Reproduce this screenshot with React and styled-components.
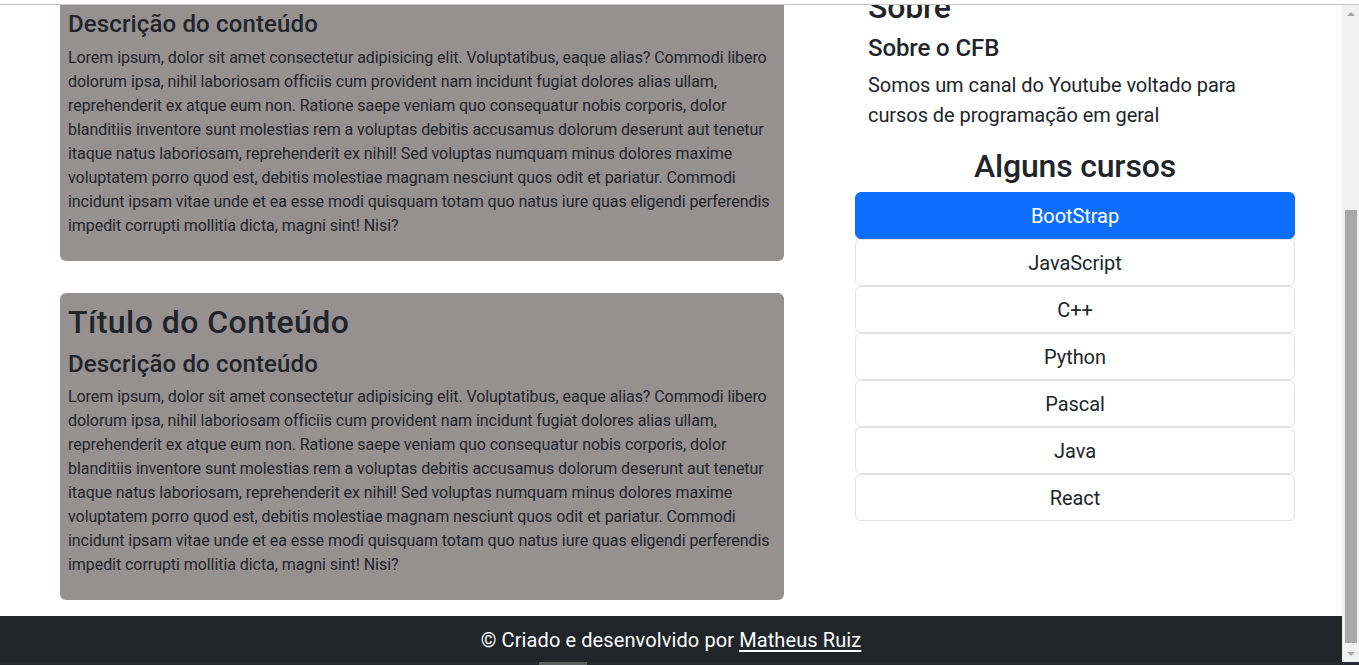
import React from "react";
import styled, { createGlobalStyle } from "styled-components";

const GlobalStyle = createGlobalStyle`
  * { box-sizing: border-box; }
  html, body { margin: 0; padding: 0; overflow: hidden; }
  body {
    font-family: Roboto, "Noto Sans", sans-serif;
    color: #212529;
    background: #fff;
    letter-spacing: -0.06px;
  }
`;

const Frame = styled.div`
  display: flex;
  flex-direction: column;
  width: 1359px;
  height: 665px;
`;

const TopStrip = styled.div`
  height: 5px;
  flex: none;
  background: #fff;
  border-bottom: 1px solid #c6c6c6;
`;

const Viewport = styled.div`
  display: flex;
  flex: 1;
  min-height: 0;
`;

const Page = styled.div`
  flex: 1;
  overflow: hidden;
`;

const Content = styled.div`
  margin-top: ${(p) => p.$scroll}px;
`;

const Main = styled.main`
  display: grid;
  grid-template-columns: 724px 440px;
  column-gap: 71px;
  padding-left: 60px;
  align-items: start;
`;

const LeftCol = styled.section`
  display: flex;
  flex-direction: column;
  gap: 32px;
`;

const Card = styled.article`
  background: #959191;
  border-radius: 6px;
  padding: 9px 8px 7px;
`;

const Title = styled.h2`
  margin: 0 0 7px;
  padding-top: 1px;
  font-size: 32px;
  font-weight: 500;
  line-height: 1.2;
  letter-spacing: -0.2px;
  text-align: ${(p) => (p.$center ? "center" : "left")};
`;

const CardTitle = styled(Title)`
  letter-spacing: 0.45px;
`;

const Subtitle = styled.h4`
  margin: 0 0 7px;
  padding-top: 1px;
  font-size: 24px;
  font-weight: 500;
  line-height: 1.2;
  letter-spacing: ${(p) => (p.$wide ? "0.14px" : "-0.1px")};
`;

const Para = styled.p`
  margin: 0 0 16px;
  font-size: 16px;
  line-height: 1.5;
`;

const Line = styled.span`
  display: block;
  white-space: nowrap;
`;

const RightCol = styled.aside`
  padding-top: 33px;
  display: flex;
  flex-direction: column;
`;

const About = styled.div`
  padding: 0 13px;
`;

const AboutText = styled.p`
  margin: 0 0 16px;
  font-size: 20px;
  line-height: 1.5;
`;

const CourseList = styled.div`
  display: flex;
  flex-direction: column;
  margin-top: -1px;
`;

const CourseItem = styled.a`
  display: flex;
  align-items: center;
  justify-content: center;
  height: 47px;
  padding-top: 2px;
  border: 1px solid ${(p) => (p.$active ? "#0d6efd" : "#e2e2e2")};
  border-radius: 6px;
  background: ${(p) => (p.$active ? "#0d6efd" : "#fff")};
  color: ${(p) => (p.$active ? "#fff" : "#212529")};
  font-size: 20px;
  line-height: 30px;
  text-decoration: none;
`;

const Footer = styled.footer`
  margin-top: 16px;
  background: #212529;
  color: #fff;
  padding: 9px 0 7px;
  text-align: center;
  font-size: 20px;
  line-height: 30px;
  letter-spacing: 0.1px;
`;

const FooterLink = styled.a`
  color: #fff;
  text-decoration: underline;
  text-underline-offset: 3px;
`;

const Scrollbar = styled.div`
  width: 17px;
  flex: none;
  background: #f1f1f1;
  display: flex;
  flex-direction: column;
`;

const Arrow = styled.div`
  height: 17px;
  flex: none;
  display: flex;
  align-items: center;
  justify-content: center;
  &::before {
    content: "";
    width: 0;
    height: 0;
    border-left: 4px solid transparent;
    border-right: 4px solid transparent;
    ${(p) =>
      p.$down
        ? "border-top: 4px solid #a3a3a3;"
        : "border-bottom: 4px solid #a3a3a3;"}
  }
`;

const Track = styled.div`
  flex: 1;
  display: flex;
  flex-direction: column;
`;

const Thumb = styled.div`
  margin-top: ${(p) => p.$offset}px;
  margin-left: 3px;
  width: 12px;
  height: ${(p) => p.$size}px;
  background: #a8a8a8;
`;

const BottomStrip = styled.div`
  height: 3px;
  flex: none;
  background: #26292d;
  display: flex;
`;

const BottomThumb = styled.div`
  margin-left: 539px;
  width: 48px;
  background: #5d5e60;
`;

const loremLines = [
  "Lorem ipsum, dolor sit amet consectetur adipisicing elit. Voluptatibus, eaque alias? Commodi libero",
  "dolorum ipsa, nihil laboriosam officiis cum provident nam incidunt fugiat dolores alias ullam,",
  "reprehenderit ex atque eum non. Ratione saepe veniam quo consequatur nobis corporis, dolor",
  "blanditiis inventore sunt molestias rem a voluptas debitis accusamus dolorum deserunt aut tenetur",
  "itaque natus laboriosam, reprehenderit ex nihil! Sed voluptas numquam minus dolores maxime",
  "voluptatem porro quod est, debitis molestiae magnam nesciunt quos odit et pariatur. Commodi",
  "incidunt ipsam vitae unde et ea esse modi quisquam totam quo natus iure quas eligendi perferendis",
  "impedit corrupti mollitia dicta, magni sint! Nisi?",
];

const courses = ["BootStrap", "JavaScript", "C++", "Python", "Pascal", "Java", "React"];

function ContentCard() {
  return (
    <Card>
      <CardTitle>Título do Conteúdo</CardTitle>
      <Subtitle $wide>Descrição do conteúdo</Subtitle>
      <Para>
        {loremLines.map((l) => (
          <Line key={l}>{l}</Line>
        ))}
      </Para>
    </Card>
  );
}

export default function App() {
  return (
    <Frame>
      <GlobalStyle />
      <TopStrip />
      <Viewport>
        <Page>
          <Content $scroll={-51}>
            <Main>
              <LeftCol>
                <ContentCard />
                <ContentCard />
              </LeftCol>
              <RightCol>
                <About>
                  <Title>Sobre</Title>
                  <Subtitle>Sobre o CFB</Subtitle>
                  <AboutText>
                    Somos um canal do Youtube voltado para cursos de programação em geral
                  </AboutText>
                </About>
                <Title $center>Alguns cursos</Title>
                <CourseList>
                  {courses.map((c, i) => (
                    <CourseItem key={c} href="#" $active={i === 0}>
                      {c}
                    </CourseItem>
                  ))}
                </CourseList>
              </RightCol>
            </Main>
            <Footer>
              © Criado e desenvolvido por <FooterLink href="#">Matheus Ruiz</FooterLink>
            </Footer>
          </Content>
        </Page>
        <Scrollbar>
          <Arrow />
          <Track>
            <Thumb $offset={188} $size={433} />
          </Track>
          <Arrow $down />
        </Scrollbar>
      </Viewport>
      <BottomStrip>
        <BottomThumb />
      </BottomStrip>
    </Frame>
  );
}
